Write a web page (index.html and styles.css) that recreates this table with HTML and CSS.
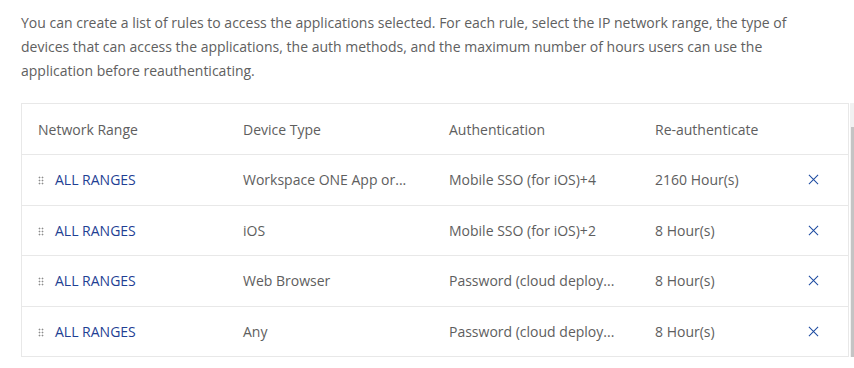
FILE: index.html
```html
<!DOCTYPE html>
<html>
<head>
<meta charset="utf-8">
<link rel="stylesheet" href="styles.css">
</head>
<body>
<div class="page">
  <p class="intro">You can create a list of rules to access the applications selected. For each rule, select the IP network range, the type of devices that can access the applications, the auth methods, and the maximum number of hours users can use the application before reauthenticating.</p>
  <div class="grid-wrap">
    <div class="grid">
      <div class="row head">
        <div class="cell">Network Range</div>
        <div class="cell">Device Type</div>
        <div class="cell">Authentication</div>
        <div class="cell">Re-authenticate</div>
        <div class="cell act"></div>
      </div>
      <div class="row">
        <div class="cell"><span class="grip"></span><a class="link">ALL RANGES</a></div>
        <div class="cell">Workspace ONE App or...</div>
        <div class="cell">Mobile SSO (for iOS)+4</div>
        <div class="cell">2160 Hour(s)</div>
        <div class="cell act"><svg class="x" width="12" height="12" viewBox="0 0 12 12"><path d="M1 1L11 11M11 1L1 11" stroke="#1c4aa0" stroke-width="1.1" fill="none"/></svg></div>
      </div>
      <div class="row">
        <div class="cell"><span class="grip"></span><a class="link">ALL RANGES</a></div>
        <div class="cell">iOS</div>
        <div class="cell">Mobile SSO (for iOS)+2</div>
        <div class="cell">8 Hour(s)</div>
        <div class="cell act"><svg class="x" width="12" height="12" viewBox="0 0 12 12"><path d="M1 1L11 11M11 1L1 11" stroke="#1c4aa0" stroke-width="1.1" fill="none"/></svg></div>
      </div>
      <div class="row">
        <div class="cell"><span class="grip"></span><a class="link">ALL RANGES</a></div>
        <div class="cell">Web Browser</div>
        <div class="cell">Password (cloud deploy...</div>
        <div class="cell">8 Hour(s)</div>
        <div class="cell act"><svg class="x" width="12" height="12" viewBox="0 0 12 12"><path d="M1 1L11 11M11 1L1 11" stroke="#1c4aa0" stroke-width="1.1" fill="none"/></svg></div>
      </div>
      <div class="row">
        <div class="cell"><span class="grip"></span><a class="link">ALL RANGES</a></div>
        <div class="cell">Any</div>
        <div class="cell">Password (cloud deploy...</div>
        <div class="cell">8 Hour(s)</div>
        <div class="cell act"><svg class="x" width="12" height="12" viewBox="0 0 12 12"><path d="M1 1L11 11M11 1L1 11" stroke="#1c4aa0" stroke-width="1.1" fill="none"/></svg></div>
      </div>
    </div>
    <div class="scroll"><div class="thumb"></div></div>
  </div>
</div>
</body>
</html>
```
FILE: styles.css
```css
html, body {
  margin: 0;
  padding: 0;
  background: #ffffff;
}
body {
  font-family: "Open Sans", "Lato", sans-serif;
  font-size: 14px;
  color: #575757;
}
.page {
  padding: 11px 0 0 21px;
}
.intro {
  margin: 0;
  width: 815px;
  line-height: 24px;
  font-size: 14px;
  color: #606060;
}
.grid-wrap {
  margin-top: 20px;
  display: flex;
  align-items: flex-start;
}
.grid {
  width: 827px;
  border: 1px solid #e8e8e8;
}
.row {
  display: grid;
  grid-template-columns: 206px 206px 206px 135px 1fr;
  height: 49.5px;
  align-items: center;
  border-top: 1px solid #e8e8e8;
}
.row.head {
  border-top: none;
  height: 50px;
}
.cell {
  padding-left: 16px;
  display: flex;
  align-items: center;
  white-space: nowrap;
  color: #5e5e5e;
}
.cell:nth-child(2), .cell:nth-child(3), .cell:nth-child(4) {
  padding-left: 15px;
}
.grip {
  width: 6px;
  height: 9px;
  margin-right: 11px;
  margin-top: 2px;
  background-image: radial-gradient(circle, #8c8c8c 0.8px, transparent 1.1px);
  background-size: 3px 3px;
  background-position: 0 0;
}
.link {
  color: #1f3f94;
  text-decoration: none;
}
.act {
  padding-left: 33px;
}
.x {
  display: block;
  width: 11px;
  height: 11px;
}
.scroll {
  width: 4px;
  height: 254px;
  margin-left: 1px;
  background: #f1f1f1;
}
.thumb {
  margin-top: 24px;
  margin-left: 1px;
  width: 3px;
  height: 230px;
  background: #c4c4c4;
}
```
